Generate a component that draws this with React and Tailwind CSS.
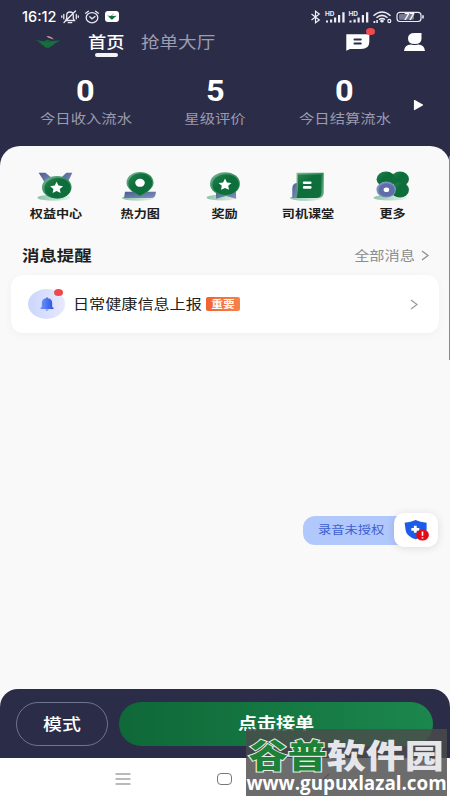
import React from 'react';

const stats = [
  { value: '0', label: '今日收入流水' },
  { value: '5', label: '星级评价' },
  { value: '0', label: '今日结算流水' },
];

const STAR = 'M0 -5.8 L1.9 -2 L6.5 -1.4 L3.2 1.4 L4 5.4 L0 3.5 L-4 5.4 L-3.2 1.4 L-6.5 -1.4 L-1.9 -2 Z';

const Gradients = () => (
  <svg className="absolute w-0 h-0" aria-hidden="true">
    <defs>
      <linearGradient id="rim" x1="0" y1="0" x2="1" y2="1">
        <stop offset="0" stopColor="#7db999" />
        <stop offset="0.5" stopColor="#2f8a57" />
        <stop offset="1" stopColor="#68ab86" />
      </linearGradient>
      <linearGradient id="leaf" x1="0" y1="0" x2="1" y2="1">
        <stop offset="0" stopColor="#2c8453" />
        <stop offset="0.4" stopColor="#0c6e3a" />
        <stop offset="1" stopColor="#116f3e" />
      </linearGradient>
      <linearGradient id="slate" x1="0" y1="0" x2="1" y2="1">
        <stop offset="0" stopColor="#4b5d90" />
        <stop offset="1" stopColor="#8191bf" />
      </linearGradient>
      <linearGradient id="shade" x1="0" y1="0" x2="1" y2="0">
        <stop offset="0" stopColor="#8dc5a8" />
        <stop offset="1" stopColor="#e3f1ea" />
      </linearGradient>
      <linearGradient id="bell" x1="0" y1="0" x2="1" y2="0">
        <stop offset="0" stopColor="#6f94f8" />
        <stop offset="1" stopColor="#2b53e4" />
      </linearGradient>
    </defs>
  </svg>
);

const MedalIcon = () => (
  <svg width="40" height="32" viewBox="0 0 40 32">
    <ellipse cx="18" cy="27.7" rx="16.5" ry="3" fill="url(#shade)" />
    <path d="M2.7 2.7H9.5L17 9L9 13Z" fill="url(#slate)" />
    <path d="M36.3 2.7H30.3L24 9L32 12Z" fill="url(#slate)" />
    <ellipse cx="20.8" cy="17.3" rx="14.8" ry="11.3" fill="url(#rim)" />
    <ellipse cx="21.6" cy="18.2" rx="13.2" ry="10.2" fill="url(#leaf)" />
    <path d={STAR} transform="translate(20.6 17.6)" fill="#fff" />
  </svg>
);

const HeatmapIcon = () => (
  <svg width="40" height="32" viewBox="0 0 40 32">
    <ellipse cx="18" cy="28" rx="16" ry="2.8" fill="url(#shade)" />
    <path d="M5 21.7H36L35.4 25Q34.7 28 31.5 28H4Z" fill="url(#slate)" />
    <path d="M20 26.2C16 24 6.5 19.5 6.5 12.8C6.5 6.5 12.5 2 20 2S33.6 6.5 33.6 12.8C33.6 19.5 24 24 20 26.2Z" fill="url(#rim)" />
    <path d="M20 25.8C16.5 23.5 8.4 19.5 8.4 13.4C8.4 7.5 14 3.2 20.5 3.2S32.4 7.5 32.4 13.4C32.4 19.5 24 23.5 20 25.8Z" fill="url(#leaf)" />
    <ellipse cx="20" cy="12.8" rx="4.8" ry="4" fill="#fff" />
  </svg>
);

const RewardIcon = () => (
  <svg width="40" height="32" viewBox="0 0 40 32">
    <ellipse cx="18" cy="27.5" rx="15.5" ry="3" fill="url(#shade)" />
    <path d="M12 20H32V28.8L22 26L12 28.8Z" fill="url(#slate)" />
    <ellipse cx="21" cy="13.8" rx="15" ry="11.6" fill="url(#rim)" />
    <ellipse cx="21.7" cy="14.6" rx="13.3" ry="10.4" fill="url(#leaf)" />
    <path d={STAR} transform="translate(21 14.4)" fill="#fff" />
  </svg>
);

const ClassIcon = () => (
  <svg width="40" height="32" viewBox="0 0 40 32">
    <ellipse cx="18" cy="28" rx="16" ry="2.9" fill="url(#shade)" />
    <path d="M4.3 28V18Q4.6 13 9.5 13V28Z" fill="url(#slate)" />
    <path d="M8.6 2.8H35.7V22.5Q35.7 28 29.5 28H8.6Z" fill="url(#rim)" />
    <path d="M10 4.4H33.4V22.5Q33.4 28 27 28H8.6Q10 25 10 20Z" fill="url(#leaf)" />
    <rect x="14.8" y="11.4" width="8.8" height="2.7" rx="1.3" fill="#fff" />
    <rect x="14.8" y="16.1" width="8.8" height="2.7" rx="1.3" fill="#fff" />
  </svg>
);

const MoreIcon = () => (
  <svg width="40" height="32" viewBox="0 0 40 32">
    <ellipse cx="18" cy="27.7" rx="16.5" ry="2.8" fill="url(#shade)" />
    <ellipse cx="28" cy="9" rx="9" ry="7.4" fill="url(#leaf)" />
    <ellipse cx="28" cy="19.8" rx="9" ry="7.6" fill="url(#leaf)" />
    <ellipse cx="14" cy="9.2" rx="9.4" ry="7.6" fill="url(#leaf)" />
    <ellipse cx="14.2" cy="19.6" rx="9.8" ry="8" fill="#8290c0" />
    <ellipse cx="14.6" cy="19.9" rx="8.2" ry="6.7" fill="#5d6ea8" />
    <ellipse cx="14.4" cy="19.8" rx="2.8" ry="2.3" fill="#fff" />
  </svg>
);

const services = [
  { label: '权益中心', Icon: MedalIcon },
  { label: '热力图', Icon: HeatmapIcon },
  { label: '奖励', Icon: RewardIcon },
  { label: '司机课堂', Icon: ClassIcon },
  { label: '更多', Icon: MoreIcon },
];

const Wings = ({ className }) => (
  <svg viewBox="0 0 26 14" preserveAspectRatio="none" className={className}>
    <path d="M0 4.8L9 6.2L12.5 4.6L16 6L25.5 5.3L20 8.6L17.5 10.5L13 13.4L8.5 11.6L9.5 10.6L5 9L6.5 8Z" fill="#12683a" />
    <path d="M4 7L12 8.8L22 6.8M7 9.4L13 11L19 8.8" stroke="#2f8052" strokeWidth="0.5" fill="none" />
    <path d="M11.5 1Q16 0.5 19 4.5L15.5 3.6Q13 3.2 11.5 1Z" fill="#c79096" />
  </svg>
);

const Arrow = ({ className }) => (
  <svg width="8" height="11" viewBox="0 0 8 11" fill="none" stroke="currentColor" strokeWidth="1.2" className={className}>
    <path d="M1 1L7 5.5L1 10" />
  </svg>
);

const StatusBar = () => (
  <div className="flex items-center h-[26px] pt-[7px] pl-[22px] text-white">
    <span className="mt-px w-9 text-[14.5px] leading-none font-medium font-['Inter',sans-serif] whitespace-nowrap">16:12</span>
    <svg width="42" height="16" viewBox="0 0 42 16" className="ml-[3px]" fill="none" stroke="#e8e8f2" strokeWidth="1.3" strokeLinecap="round">
      {/* muted bell */}
      <path d="M4.5 11.5H13.5L12.3 9.6V6.5Q12.3 3 9 3T5.7 6.5V9.6ZM7.3 13.7H10.7M14.5 2L3 13.5" />
      <path d="M2.8 5.5V9.8M0.8 7V8.3M15.3 5.5V9.8M17.3 7V8.3" />
      {/* alarm clock */}
      <ellipse cx="31" cy="8.7" rx="5.8" ry="5.1" />
      <path d="M24.6 4.2L27.4 2.2M37.4 4.2L34.6 2.2M28.8 7.8L31 9.8L34 7.4" />
    </svg>
    <span className="ml-[2px] flex h-[11px] w-[14px] items-center justify-center rounded-[3px] bg-white">
      <Wings className="h-[7px] w-[10px]" />
    </span>
    <svg width="116" height="16" viewBox="0 0 116 16" className="ml-auto mr-[24px]" fill="none" stroke="#ececf4" strokeWidth="1.2">
      <path d="M1.5 5L9.3 11L5.5 13.8V2.2L9.3 5L1.5 11" />
      <g fill="#ececf4" stroke="none">
        <text x="15" y="6.5" fontSize="5.6" fontWeight="700" fontFamily="Inter" textLength="9.5" lengthAdjust="spacingAndGlyphs">HD</text>
        <path d="M16 11.5h2v2h-2zM20 10.5h2.2v3H20zM24 8.5h2.2v5H24zM28 6h2.2v7.5H28zM32.3 3.2h2.3v10.3h-2.3z" />
        <text x="38.5" y="6.5" fontSize="5.6" fontWeight="700" fontFamily="Inter" textLength="9.5" lengthAdjust="spacingAndGlyphs">HD</text>
        <path d="M39.5 11.5h2v2h-2zM43.5 10.5h2.2v3h-2.2zM47.5 8.5h2.2v5h-2.2zM51.8 6H54v7.5h-2.2zM56 3.2h2.3v10.3H56z" />
        <ellipse cx="72" cy="12" rx="1.8" ry="1.5" />
        <path d="M63.5 12h1.8v2h-1.8zM66.3 11h1.6v3h-1.6z" />
      </g>
      <path d="M63.5 6.7Q72 -0.7 80.5 6.7M66.4 8.8Q72 4 77.6 8.8M69 10.6Q72 8.2 75 10.6" strokeWidth="1.5" />
      <ellipse cx="79.3" cy="12" rx="1.5" ry="1.6" />
      <rect x="87" y="3.3" width="24" height="9.2" rx="3" />
      <rect x="89" y="5.1" width="15" height="5.6" rx="1.3" fill="#77788f" stroke="none" />
      <path d="M113 6.3V9.5" strokeWidth="1.6" />
      <text x="94" y="11" fontSize="8.5" fontWeight="700" fontStyle="italic" fontFamily="Inter" textLength="10" lengthAdjust="spacingAndGlyphs" fill="#fff" stroke="none">77</text>
    </svg>
  </div>
);

const NavTabs = () => (
  <div className="flex items-center h-8">
    <Wings className="ml-[35px] h-[14px] w-[26px]" />
    <div className="relative ml-[27px] w-[53px] pb-[2px]">
      <span className="block w-8 origin-left scale-x-[1.14] text-base leading-none font-medium text-white whitespace-nowrap">首页</span>
      <span className="absolute left-[7px] top-[20px] h-[4px] w-[23px] rounded-full bg-[#f3f3f6]" />
    </div>
    <span className="mb-[2px] block w-16 origin-left scale-x-[1.16] text-base leading-none text-[#9c9db0] whitespace-nowrap">抢单大厅</span>
    <div className="ml-auto flex items-center pr-[25px]">
      <div className="relative">
        <svg width="24" height="17" viewBox="0 0 24 17">
          <path d="M0.3 0.3H23.3V8Q23.3 15 15 15H4L0.3 16.7Z" fill="#fff" />
          <path d="M8.5 5.5H14.8M8.5 9.5H14.8" stroke="#2b2c47" strokeWidth="2" strokeLinecap="round" />
        </svg>
        <span className="absolute left-[20px] -top-[6px] h-[7.5px] w-[9px] rounded-[50%] bg-[#f04a4d]" />
      </div>
      <svg width="21" height="18" viewBox="0 0 21 18" className="ml-[34px]">
        <path d="M10.5 0H17.5V5.5Q17.5 11 10.7 11Q4 11 4 5.5Q4 0 10.5 0Z" fill="#fff" />
        <path d="M0 18Q0.5 11.7 7 11.5Q10.5 12.7 14 11.5Q20.5 11.7 21 18Z" fill="#fff" />
      </svg>
    </div>
  </div>
);

const App = () => {
  return (
    <div className="relative flex h-[800px] w-[450px] flex-col overflow-hidden bg-[#2b2c47] font-['Noto_Sans_CJK_SC',sans-serif]">
      <Gradients />
      <StatusBar />
      <NavTabs />

      {/* Today's numbers */}
      <div className="flex h-[88px] shrink-0 pl-[21px]">
        {stats.map((s) => (
          <div key={s.label} className="flex w-[129.5px] flex-col items-center pt-[19px]">
            <span className="text-[29px] leading-[28px] font-bold text-white font-['Roboto',sans-serif] scale-x-[1.12]">{s.value}</span>
            <span className="mt-[6px] scale-x-[1.18] text-[13px] leading-[13px] text-[#9a9bb0] whitespace-nowrap">{s.label}</span>
          </div>
        ))}
        <svg width="11" height="12" viewBox="0 0 11 12" className="mt-[41px] ml-[3px]">
          <path d="M1.5 1.5L9.5 6L1.5 10.5Z" fill="#fff" stroke="#fff" strokeWidth="1.2" strokeLinejoin="round" />
        </svg>
      </div>

      {/* Content panel */}
      <main className="relative flex h-[543px] shrink-0 flex-col rounded-t-[20px] bg-[#f9f9f9]">
        <span className="absolute right-0 top-[10px] h-[204px] w-px bg-[#85869a]" />
        <div className="flex px-[14px] pt-6">
          {services.map(({ label, Icon }) => (
            <div key={label} className="flex w-[84px] flex-col items-center">
              <Icon />
              <span className="mt-[5px] scale-x-[1.14] text-[11.5px] leading-[12px] font-bold text-[#202020] whitespace-nowrap">{label}</span>
            </div>
          ))}
        </div>

        <div className="mt-[27px] flex h-[18px] items-center pl-[22px] pr-[21px]">
          <h2 className="mb-[2px] origin-left scale-x-[1.16] text-[15px] leading-none font-bold text-[#202020]">消息提醒</h2>
          <span className="mb-px ml-auto mr-[6px] origin-right scale-x-[1.17] text-[13px] leading-none text-[#8c8c8c]">全部消息</span>
          <Arrow className="text-[#8c8c8c]" />
        </div>

        <div className="mt-[11px] mx-[11px] flex h-[58px] items-center rounded-[12px] bg-white pl-[17px] pr-[21px] shadow-[0_2px_10px_rgba(0,0,0,0.04)]">
          <div className="relative flex h-[30px] w-[37px] items-center justify-center rounded-[50%] bg-linear-to-r from-[#ccd6fc] to-[#e7e9fc]">
            <svg width="14" height="14" viewBox="0 0 14 14">
              <path d="M7 0.3Q8 0.3 8 1.2Q12.2 2 12.2 6V10L13.5 10.8V12H0.5V10.8L1.8 10V6Q1.8 2 6 1.2Q6 0.3 7 0.3Z" fill="url(#bell)" />
              <path d="M5.3 12.3H8.7L7.8 13.9H6.2Z" fill="#8ca5f5" />
            </svg>
            <span className="absolute left-[26px] top-0 h-[7px] w-[9px] rounded-[50%] bg-[#ef484c]" />
          </div>
          <span className="mb-[2px] ml-[8px] w-[133px] origin-left scale-x-[1.15] text-[14px] leading-none text-[#202020] whitespace-nowrap">日常健康信息上报</span>
          <span className="flex h-[14px] w-[34px] items-center justify-center rounded-[2px] bg-linear-to-r from-[#f3602f] to-[#f5824a]">
            <span className="mb-px scale-x-[1.17] text-[10px] leading-none font-bold text-white whitespace-nowrap">重要</span>
          </span>
          <Arrow className="ml-auto text-[#9a9a9a]" />
        </div>

        {/* Recording permission */}
        <div className="mt-[180px] ml-auto mr-[12px] flex items-center">
          <div className="-mr-[12px] flex h-[29px] w-[103px] items-center rounded-l-[12px] bg-[#b1c8fd] pl-[15px]">
            <span className="origin-left scale-x-[1.15] text-[11.5px] leading-none text-[#3e5fd0] whitespace-nowrap">录音未授权</span>
          </div>
          <div className="relative flex h-[34px] w-[44px] items-center justify-center rounded-[10px] bg-white shadow-[0_1px_8px_rgba(0,0,0,0.12)]">
            <svg width="26" height="22" viewBox="0 0 26 22">
              <path d="M12.6 1Q17 3.3 23.6 3.7V11Q22 17.2 12.6 20.3Q3.2 17.2 2.6 11L1.6 3.7Q8.2 3.3 12.6 1Z" fill="#1c5ce8" />
              <path d="M12.3 6.8V13.8M8.3 10.3H16.3" stroke="#fff" strokeWidth="2.8" />
              <ellipse cx="19.5" cy="16" rx="6.4" ry="5.5" fill="#e00d18" />
              <path d="M19.5 12.5V16.8M19.5 18.2V19.6" stroke="#fff" strokeWidth="1.6" />
            </svg>
          </div>
        </div>
      </main>

      {/* Order actions */}
      <div className="h-[69px] shrink-0 bg-[#f9f9f9]">
        <div className="flex h-full items-center rounded-t-[18px] bg-[#2b2c47] pl-4">
          <button className="flex h-11 w-[92px] items-center justify-center rounded-full border border-[#71728c]">
            <span className="mb-[2px] scale-x-[1.18] text-base leading-none font-medium text-white">模式</span>
          </button>
          <button className="ml-[11px] flex h-11 w-[314px] items-center justify-center rounded-full bg-linear-to-r from-[#0f6838] to-[#1b874d]">
            <span className="mb-[3px] scale-x-[1.19] text-base leading-none font-bold text-white">点击接单</span>
          </button>
        </div>
      </div>

      {/* System navigation */}
      <div className="flex h-[42px] shrink-0 items-center bg-white pl-[115px]">
        <svg width="16" height="12" viewBox="0 0 16 12" stroke="#777" strokeWidth="1.1">
          <path d="M0.5 1H15.5M0.5 6H15.5M0.5 11H15.5" />
        </svg>
        <span className="ml-[86px] h-[12px] w-[15px] rounded-[4px] border-[1.3px] border-[#777]" />
        <svg width="8" height="12" viewBox="0 0 8 12" className="ml-[90px]" fill="none" stroke="#777" strokeWidth="1.1">
          <path d="M7 1L1.5 6L7 11" />
        </svg>
      </div>

      {/* Site stamp */}
      <div className="absolute left-[246px] top-[729px] flex h-[67px] w-[201px] flex-col items-center bg-[#4c4c4c]/82 pt-[9px] font-bold">
        <div className="scale-x-[1.2] text-[32.5px] leading-[32px] font-black whitespace-nowrap text-[#e6e6ea]">
          <span className="text-[#1d8237] [-webkit-text-stroke:2px_#e8eee8] [paint-order:stroke_fill]">谷普</span>
          <span>软件园</span>
        </div>
        <span className="mt-[3px] scale-x-[0.94] text-[20px] leading-[20px] text-white font-['Open_Sans',sans-serif] whitespace-nowrap">www.gupuxlazal.com</span>
      </div>
    </div>
  );
};

export default App;
